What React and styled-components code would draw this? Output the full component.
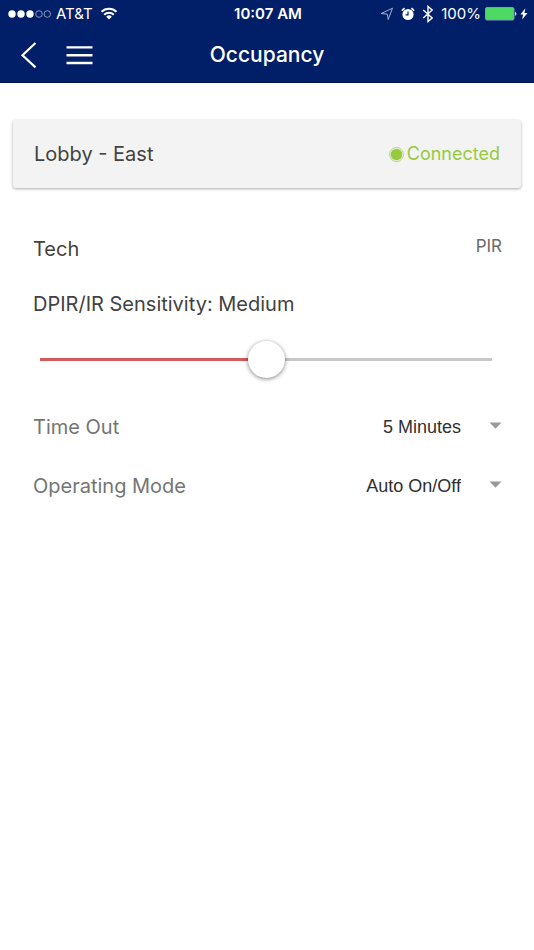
import React, { useState } from 'react';
import styled, { createGlobalStyle } from 'styled-components';

const GlobalStyle = createGlobalStyle`
    * {
        box-sizing: border-box;
    }
    body {
        margin: 0;
        background: #fff;
        color: #424242;
        font-family: Inter, Roboto, sans-serif;
    }
`;

const Header = styled.header`
    background: #011f68;
    border-bottom: 1px solid #00134f;
    color: #fff;
`;

const StatusBar = styled.div`
    display: grid;
    grid-template-columns: 1fr auto 1fr;
    align-items: center;
    height: 27px;
    padding: 0 6px 0 8px;
    font-size: 15px;
    line-height: 20px;
`;

const StatusGroup = styled.div`
    display: flex;
    align-items: center;
    justify-content: ${props => props.align || 'flex-start'};
    gap: ${props => props.gap};
`;

const Clock = styled.time`
    font-size: 15px;
    font-weight: 600;
`;

const NavBar = styled.div`
    display: grid;
    grid-template-columns: 1fr auto 1fr;
    align-items: center;
    height: 55px;
    padding: 0 20px;
`;

const NavButtons = styled.div`
    display: flex;
    gap: 28px;
`;

const IconButton = styled.button`
    display: flex;
    padding: 0;
    border: none;
    background: none;
    color: inherit;
    cursor: pointer;
`;

const Title = styled.h1`
    margin: 0;
    font-size: 21px;
    font-weight: 500;
    line-height: 28px;
`;

const Content = styled.main`
    padding: 37px 13px 0;
`;

const DeviceCard = styled.section`
    display: flex;
    align-items: center;
    justify-content: space-between;
    height: 68px;
    padding: 0 21px;
    border-radius: 3px;
    background: #f3f3f3;
    box-shadow: 0 1px 3px rgba(0, 0, 0, 0.34);
`;

const DeviceName = styled.h2`
    margin: 0;
    font-size: 20px;
    font-weight: 400;
    line-height: 28px;
`;

const Status = styled.span`
    display: flex;
    align-items: center;
    gap: 3px;
    color: #97ca3d;
    font-size: 18px;
    line-height: 28px;
`;

const Settings = styled.section`
    padding: 31px 19px 0 20px;
`;

const Row = styled.div`
    display: flex;
    align-items: center;
    justify-content: space-between;
    height: 59px;
`;

const Label = styled.label`
    color: ${props => props.$muted ? '#757575' : '#424242'};
    font-size: 20px;
    line-height: 28px;
`;

const Value = styled.span`
    padding-bottom: 5px;
    color: #6a6a6a;
    font-size: 17px;
    line-height: 24px;
`;

const SliderField = styled.div`
    display: flex;
    flex-direction: column;
    gap: 22px;
    padding: 12px 0 18px;
`;

const Slider = styled.input`
    appearance: none;
    height: 39px;
    margin: 0 10px 0 7px;
    background: linear-gradient(to right, #d6595b var(--fill), #c8c8c8 var(--fill)) center / 100% 3px no-repeat;
    cursor: pointer;

    &::-webkit-slider-thumb {
        appearance: none;
        width: 37px;
        height: 37px;
        border-radius: 50%;
        background: #fff;
        box-shadow: 0 1px 4px rgba(0, 0, 0, 0.5);
    }
`;

const SelectWrap = styled.div`
    position: relative;
    display: flex;
    align-items: center;

    svg {
        position: absolute;
        right: 0;
        pointer-events: none;
    }
`;

const Select = styled.select`
    appearance: none;
    width: 180px;
    height: 40px;
    padding: 0 41px 0 0;
    border: none;
    background: none;
    color: #303030;
    font-family: "Liberation Sans", Arial, sans-serif;
    font-size: 18px;
    text-align: right;
    text-align-last: right;
    cursor: pointer;
`;

const SignalIcon = () => (
    <svg width="43" height="10" viewBox="0 0 43 10" aria-hidden="true">
        <circle cx="4" cy="5" r="3.7" fill="#fff" />
        <circle cx="13" cy="5" r="3.7" fill="#fff" />
        <circle cx="22" cy="5" r="3.7" fill="#fff" />
        <circle cx="31" cy="5" r="3.3" fill="none" stroke="#a5b0cd" strokeWidth="0.8" />
        <circle cx="39.3" cy="5" r="3.3" fill="none" stroke="#a5b0cd" strokeWidth="0.8" />
    </svg>
);

const WifiIcon = () => (
    <svg width="20" height="13" viewBox="-2 0 20 13" fill="none" stroke="#fff" strokeWidth="2" aria-hidden="true">
        <path d="M1.5 4.8a10.5 10.5 0 0 1 15 0" />
        <path d="M4.2 7.7a6.8 6.8 0 0 1 9.6 0" />
        <path d="M9 12.5 6.2 9.7a4 4 0 0 1 5.6 0z" fill="#fff" stroke="none" />
    </svg>
);

const LocationIcon = () => (
    <svg width="14" height="14" viewBox="0 0 14 14" fill="none" stroke="#a5b0cd" strokeLinejoin="round" aria-hidden="true">
        <path d="M12.5 1.2 8.2 12.5 7.4 7.2 1.2 6.5z" />
    </svg>
);

const AlarmIcon = () => (
    <svg width="14" height="14" viewBox="0 0 14 14" aria-hidden="true">
        <circle cx="7" cy="7.5" r="5.6" fill="#fff" />
        <path d="M1 3.7a9 9 0 0 1 2.6-2.5M13 3.7a9 9 0 0 0-2.6-2.5" fill="none" stroke="#fff" strokeWidth="1.6" />
        <path d="M7 4.4v3.4H4.6" fill="none" stroke="#011f68" strokeWidth="1.2" />
    </svg>
);

const BluetoothIcon = () => (
    <svg width="12" height="18" viewBox="0 0 12 18" fill="none" stroke="#fff" strokeWidth="1.4" aria-hidden="true">
        <path d="M1.2 5l9 8L6 16.6V1.4L10.2 5l-9 8" />
    </svg>
);

const BatteryIcon = () => (
    <svg width="43" height="14" viewBox="0 0 43 14" aria-hidden="true">
        <rect x="0.5" y="0.5" width="28.5" height="12.5" rx="1.5" fill="#4cd964" stroke="#8795bd" />
        <path d="M30.2 4.5q2.5 2.3 0 4.6z" fill="#fff" />
        <path d="M40.4 1.2l-5 6.4h2.8l-1.2 4.9 5.6-6.6h-3.2z" fill="#fff" />
    </svg>
);

const BackIcon = () => (
    <svg width="18" height="28" viewBox="0 0 18 28" fill="none" stroke="#fff" strokeWidth="2.2" aria-hidden="true">
        <path d="M15.5 2 2.5 14.2l13 12.2" />
    </svg>
);

const MenuIcon = () => (
    <svg width="27" height="28" viewBox="0 0 27 28" fill="none" stroke="#fff" strokeWidth="2.4" aria-hidden="true">
        <path d="M0.5 6.4h26M0.5 14.2h26M0.5 22h26" />
    </svg>
);

const ConnectedIcon = () => (
    <svg width="15" height="15" viewBox="0 0 15 15" aria-hidden="true">
        <circle cx="7.5" cy="7.5" r="5.8" fill="#97ca3d" />
        <circle cx="7.5" cy="7.5" r="7" fill="none" stroke="#97ca3d" strokeWidth="0.7" />
    </svg>
);

const ArrowIcon = () => (
    <svg width="13" height="10" viewBox="0 0 13 10" aria-hidden="true">
        <path d="M0.5 0.5h12l-6 6.3z" fill="#999" />
    </svg>
);

const levels = ['Low', 'Medium', 'High'];

const SelectRow = ({id, label, options}) => (
    <Row>
        <Label htmlFor={id} $muted>{label}</Label>
        <SelectWrap>
            <Select id={id}>
                {options.map(option => <option key={option}>{option}</option>)}
            </Select>
            <ArrowIcon />
        </SelectWrap>
    </Row>
);

export default function App() {
    const [level, setLevel] = useState(1);

    return (
        <>
            <GlobalStyle />
            <Header>
                <StatusBar>
                    <StatusGroup gap="5px">
                        <SignalIcon />
                        <span>AT&amp;T</span>
                        <WifiIcon />
                    </StatusGroup>
                    <Clock>10:07 AM</Clock>
                    <StatusGroup align="flex-end" gap="7px">
                        <LocationIcon />
                        <AlarmIcon />
                        <BluetoothIcon />
                        <StatusGroup gap="4px">
                            <span>100%</span>
                            <BatteryIcon />
                        </StatusGroup>
                    </StatusGroup>
                </StatusBar>
                <NavBar>
                    <NavButtons>
                        <IconButton aria-label="Back"><BackIcon /></IconButton>
                        <IconButton aria-label="Menu"><MenuIcon /></IconButton>
                    </NavButtons>
                    <Title>Occupancy</Title>
                </NavBar>
            </Header>
            <Content>
                <DeviceCard>
                    <DeviceName>Lobby - East</DeviceName>
                    <Status><ConnectedIcon />Connected</Status>
                </DeviceCard>
                <Settings>
                    <Row>
                        <Label as="span">Tech</Label>
                        <Value>PIR</Value>
                    </Row>
                    <SliderField>
                        <Label htmlFor="sensitivity">DPIR/IR Sensitivity: {levels[level]}</Label>
                        <Slider
                            id="sensitivity"
                            type="range"
                            min="0"
                            max="2"
                            value={level}
                            onChange={e => setLevel(Number(e.target.value))}
                            style={{ '--fill': `${level * 50}%` }}
                        />
                    </SliderField>
                    <SelectRow id="timeout" label="Time Out" options={['5 Minutes', '10 Minutes', '15 Minutes', '30 Minutes']} />
                    <SelectRow id="mode" label="Operating Mode" options={['Auto On/Off', 'Manual On']} />
                </Settings>
            </Content>
        </>
    );
}
